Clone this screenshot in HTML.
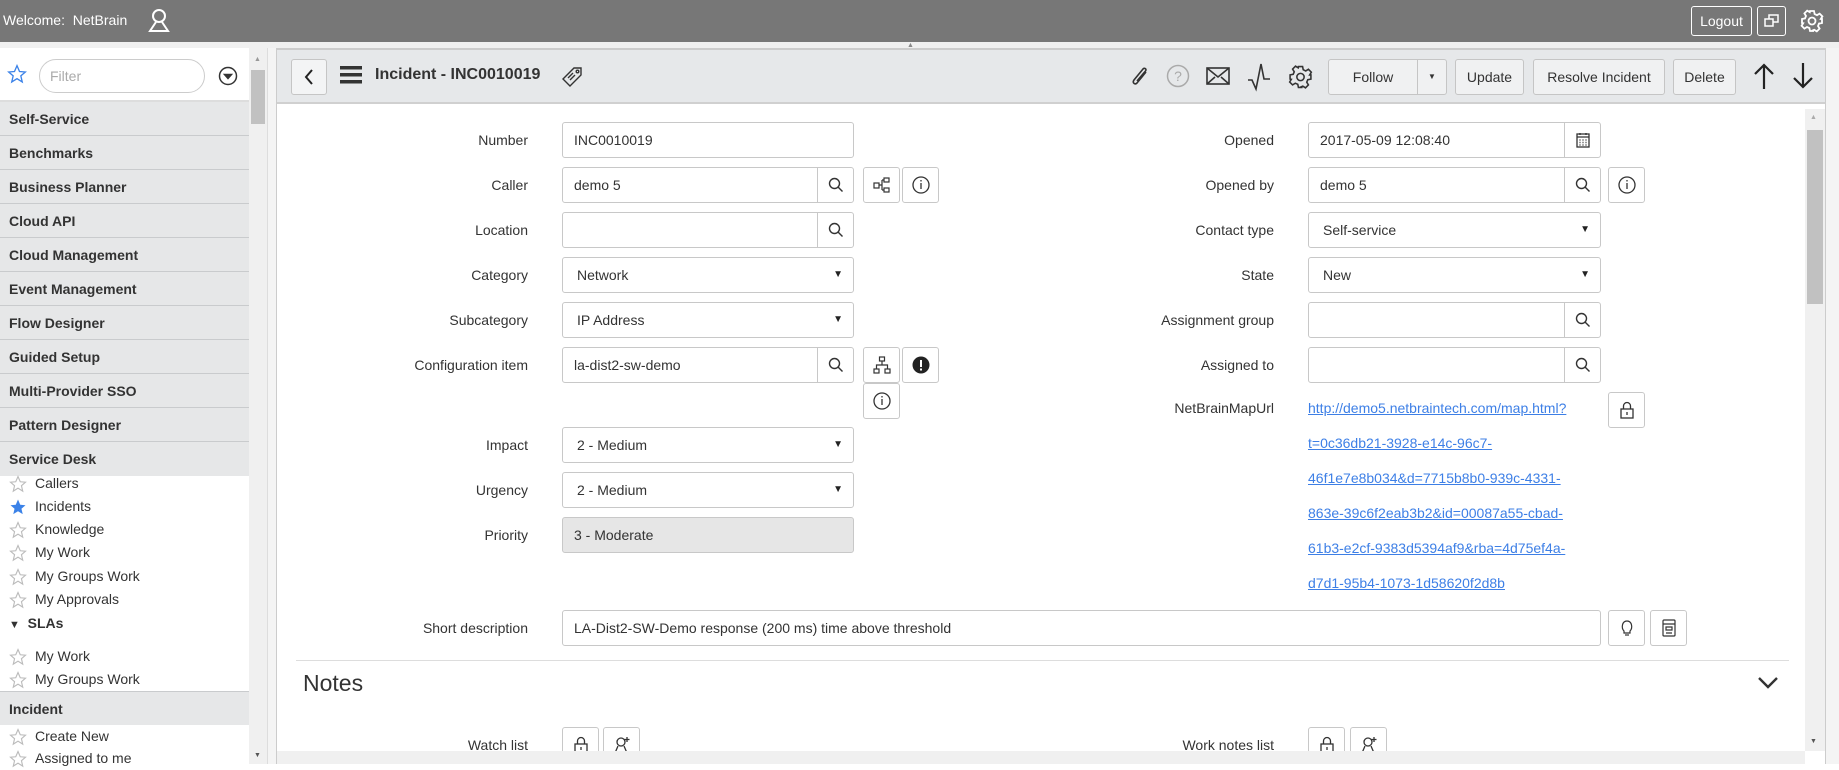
<!DOCTYPE html>
<html><head><meta charset="utf-8">
<style>
*{box-sizing:border-box;margin:0;padding:0}
body{width:1839px;height:764px;overflow:hidden;background:#fff;font-family:"Liberation Sans",Arial,sans-serif;font-size:14px;color:#333;position:relative}
.a{position:absolute}
#top{left:0;top:0;width:1839px;height:42px;background:#777}
#strip{left:0;top:42px;width:1839px;height:6px;background:#f0f0f0}
#side{left:0;top:48px;width:249px;height:716px;background:#fff}
.si{position:absolute;left:0;width:249px;height:34px;background:#e6e7e8;border-bottom:1px solid #c9cbcd;font-weight:bold;color:#333;padding:9px 0 0 9px;font-size:14px}
.li{position:absolute;left:0;width:249px;height:23px;font-size:14px;color:#333;padding-left:35px;line-height:23px}
.li svg{position:absolute;left:9px;top:3px}
.lbl{position:absolute;width:300px;text-align:right;font-size:14px;color:#333;line-height:36px;height:36px}
.inp{position:absolute;height:36px;border:1px solid #c8c8c8;border-radius:3px;background:#fff;font-size:14px;line-height:34px;padding-left:11px;color:#333}
.add{position:absolute;right:0;top:0;width:36px;height:34px;border-left:1px solid #c8c8c8}
.add svg{position:absolute;left:10px;top:9px}
.sel{padding-left:14px}
.sel:after{content:"▼";position:absolute;right:10px;top:0;line-height:34px;font-size:10px;color:#222}
.btn{position:absolute;width:37px;height:36px;border:1px solid #c8c8c8;border-radius:3px;background:#fff}
.btn svg{position:absolute;left:9px;top:8px}
.hb{position:absolute;top:59px;height:36px;border:1px solid #c5c5c5;border-radius:3px;background:#f0f1f2;font-size:14px;line-height:34px;text-align:center;color:#333}
.url{position:absolute;left:1308px;color:#3d7fe6;text-decoration:underline;font-size:14px}
</style></head><body>
<div id="top" class="a">
 <div class="a" style="left:3px;top:12px;color:#fff;font-size:14px">Welcome:&nbsp; NetBrain</div>
 <svg class="a" style="left:147px;top:8px" width="24" height="26" viewBox="0 0 24 26" fill="none" stroke="#fff" stroke-width="2"><circle cx="12" cy="8" r="6"/><path d="M9 14 L3 23 H21 L15 14"/></svg>
 <div class="a" style="left:1691px;top:6px;width:61px;height:30px;border:1px solid #fff;border-radius:3px;color:#fff;text-align:center;line-height:28px;font-size:14px">Logout</div>
 <div class="a" style="left:1757px;top:6px;width:29px;height:30px;border:1px solid #fff;border-radius:3px"><svg class="a" style="left:6px;top:7px" width="16" height="14" fill="none" stroke="#fff" stroke-width="1.5"><rect x="5" y="1" width="9" height="7"/><rect x="1" y="5" width="8" height="7" fill="#777"/></svg></div>
 <svg class="a" style="left:1800px;top:8px" width="24" height="26" viewBox="0 0 24 24" fill="none" stroke="#fff" stroke-width="1.8"><circle cx="12" cy="12" r="3.5"/><path d="M10 2h4l.6 3 2.4 1.2 2.6-1.6 2.8 2.8-1.6 2.6L22 10v4l-3 .6-1 2.4 1.6 2.6-2.8 2.8-2.6-1.6-2.4 1L14 22h-4l-.6-3-2.4-1-2.6 1.6-2.8-2.8L3.2 14.2 2 14v-4l3-.6 1-2.4L4.4 4.4l2.8-2.8 2.6 1.6L10 2z"/></svg>
</div>
<div id="strip" class="a"></div>
<div class="a" style="left:907px;top:42px;font-size:7px;color:#888">▲</div>

<div id="side" class="a">
 <svg class="a" style="left:7px;top:16px" width="20" height="20" viewBox="0 0 24 24" fill="none" stroke="#3b82e8" stroke-width="1.6"><path d="M12 2l3 7 7 .6-5.4 4.7 1.7 7.2L12 17.6 5.7 21.5l1.7-7.2L2 9.6 9 9z"/></svg>
 <div class="a" style="left:39px;top:11px;width:166px;height:34px;border:1px solid #ccc;border-radius:17px;background:#fff;color:#aaa;padding:8px 0 0 10px;font-size:14px">Filter</div>
 <svg class="a" style="left:218px;top:18px" width="20" height="20" fill="none" stroke="#333" stroke-width="1.5"><circle cx="10" cy="10" r="8.5"/><path d="M6.5 8.5h7l-3.5 4z" fill="#333"/></svg>
 <div class="a" style="left:0;top:52px;width:249px;height:2px;background:#ddd"></div>
 <div class="si" style="top:54px">Self-Service</div>
 <div class="si" style="top:88px">Benchmarks</div>
 <div class="si" style="top:122px">Business Planner</div>
 <div class="si" style="top:156px">Cloud API</div>
 <div class="si" style="top:190px">Cloud Management</div>
 <div class="si" style="top:224px">Event Management</div>
 <div class="si" style="top:258px">Flow Designer</div>
 <div class="si" style="top:292px">Guided Setup</div>
 <div class="si" style="top:326px">Multi-Provider SSO</div>
 <div class="si" style="top:360px">Pattern Designer</div>
 <div class="si" style="top:394px;border:none">Service Desk</div>
 <div class="li" style="top:424px"><svg width="18" height="18" viewBox="0 0 24 24" fill="none" stroke="#bbb" stroke-width="1.5"><path d="M12 2l3 7 7 .6-5.4 4.7 1.7 7.2L12 17.6 5.7 21.5l1.7-7.2L2 9.6 9 9z"/></svg>Callers</div>
 <div class="li" style="top:447px"><svg width="18" height="18" viewBox="0 0 24 24" fill="#3b82e8"><path d="M12 2l3 7 7 .6-5.4 4.7 1.7 7.2L12 17.6 5.7 21.5l1.7-7.2L2 9.6 9 9z"/></svg>Incidents</div>
 <div class="li" style="top:470px"><svg width="18" height="18" viewBox="0 0 24 24" fill="none" stroke="#bbb" stroke-width="1.5"><path d="M12 2l3 7 7 .6-5.4 4.7 1.7 7.2L12 17.6 5.7 21.5l1.7-7.2L2 9.6 9 9z"/></svg>Knowledge</div>
 <div class="li" style="top:493px"><svg width="18" height="18" viewBox="0 0 24 24" fill="none" stroke="#bbb" stroke-width="1.5"><path d="M12 2l3 7 7 .6-5.4 4.7 1.7 7.2L12 17.6 5.7 21.5l1.7-7.2L2 9.6 9 9z"/></svg>My Work</div>
 <div class="li" style="top:517px"><svg width="18" height="18" viewBox="0 0 24 24" fill="none" stroke="#bbb" stroke-width="1.5"><path d="M12 2l3 7 7 .6-5.4 4.7 1.7 7.2L12 17.6 5.7 21.5l1.7-7.2L2 9.6 9 9z"/></svg>My Groups Work</div>
 <div class="li" style="top:540px"><svg width="18" height="18" viewBox="0 0 24 24" fill="none" stroke="#bbb" stroke-width="1.5"><path d="M12 2l3 7 7 .6-5.4 4.7 1.7 7.2L12 17.6 5.7 21.5l1.7-7.2L2 9.6 9 9z"/></svg>My Approvals</div>
 <div class="a" style="left:9px;top:567px;font-weight:bold;font-size:14px"><span style="font-size:11px">▼</span>&nbsp;&nbsp;SLAs</div>
 <div class="li" style="top:597px"><svg width="18" height="18" viewBox="0 0 24 24" fill="none" stroke="#bbb" stroke-width="1.5"><path d="M12 2l3 7 7 .6-5.4 4.7 1.7 7.2L12 17.6 5.7 21.5l1.7-7.2L2 9.6 9 9z"/></svg>My Work</div>
 <div class="li" style="top:620px"><svg width="18" height="18" viewBox="0 0 24 24" fill="none" stroke="#bbb" stroke-width="1.5"><path d="M12 2l3 7 7 .6-5.4 4.7 1.7 7.2L12 17.6 5.7 21.5l1.7-7.2L2 9.6 9 9z"/></svg>My Groups Work</div>
 <div class="si" style="top:643px;border-top:1px solid #c9cbcd;border-bottom:none">Incident</div>
 <div class="li" style="top:677px"><svg width="18" height="18" viewBox="0 0 24 24" fill="none" stroke="#bbb" stroke-width="1.5"><path d="M12 2l3 7 7 .6-5.4 4.7 1.7 7.2L12 17.6 5.7 21.5l1.7-7.2L2 9.6 9 9z"/></svg>Create New</div>
 <div class="li" style="top:699px"><svg width="18" height="18" viewBox="0 0 24 24" fill="none" stroke="#bbb" stroke-width="1.5"><path d="M12 2l3 7 7 .6-5.4 4.7 1.7 7.2L12 17.6 5.7 21.5l1.7-7.2L2 9.6 9 9z"/></svg>Assigned to me</div>
</div>
<div class="a" style="left:249px;top:48px;width:18px;height:716px;background:#f0f0f0"></div>
<div class="a" style="left:251px;top:70px;width:14px;height:54px;background:#c1c1c1"></div>
<div class="a" style="left:254px;top:56px;font-size:7px;color:#999">▲</div>
<div class="a" style="left:254px;top:752px;font-size:7px;color:#555">▼</div>
<div class="a" style="left:267px;top:48px;width:10px;height:716px;background:#f4f4f4;border-left:1px solid #ddd;border-right:1px solid #ccc"></div>

<div class="a" style="left:277px;top:48px;width:1548px;height:56px;background:#e6e8ea;border-top:2px solid #ccc;border-bottom:2px solid #d0d0d0"></div>
<div class="a" style="left:291px;top:59px;width:36px;height:36px;border:1px solid #c5c5c5;border-radius:3px;background:#f3f4f5"><svg class="a" style="left:11px;top:9px" width="12" height="16" fill="none" stroke="#222" stroke-width="2"><path d="M9 1L3 8l6 7"/></svg></div>
<svg class="a" style="left:340px;top:66px" width="22" height="18"><rect y="0" width="22" height="3.5" fill="#333"/><rect y="7" width="22" height="3.5" fill="#333"/><rect y="14" width="22" height="3.5" fill="#333"/></svg>
<div class="a" style="left:375px;top:66px;font-weight:bold;font-size:16px;color:#333">Incident - INC0010019</div>
<svg class="a" style="left:561px;top:64px" width="24" height="24" fill="none" stroke="#333" stroke-width="1.4"><path d="M2 15L13 4l7 0 0 7L9 22z"/><circle cx="16.5" cy="7.5" r="1.3"/><path d="M7 14l5-5M9 16l5-5"/></svg>
<svg class="a" style="left:1128px;top:64px" width="24" height="26" fill="none" stroke="#333" stroke-width="1.6"><path d="M18 8L9 19c-2 2-5 0-3-3L15 5c1.5-1.5 4 0 2.5 2L9 17"/></svg>
<svg class="a" style="left:1166px;top:64px" width="24" height="24" fill="none" stroke="#aaa" stroke-width="1.5"><circle cx="12" cy="12" r="10.5"/><text x="12" y="17" text-anchor="middle" font-size="14" fill="#aaa" stroke="none" font-family="Liberation Sans">?</text></svg>
<svg class="a" style="left:1206px;top:67px" width="24" height="18" fill="none" stroke="#333" stroke-width="1.6"><rect x="1" y="1" width="22" height="16"/><path d="M1 1l11 9 11-9M1 17l8-7M23 17l-8-7"/></svg>
<svg class="a" style="left:1247px;top:62px" width="26" height="30" fill="none" stroke="#333" stroke-width="1.6"><path d="M1 18h4l4 9 5-25 3 15h6"/></svg>
<svg class="a" style="left:1288px;top:64px" width="25" height="26" viewBox="0 0 24 24" fill="none" stroke="#333" stroke-width="1.5"><circle cx="12" cy="12" r="3.5"/><path d="M10 2h4l.6 3 2.4 1.2 2.6-1.6 2.8 2.8-1.6 2.6L22 10v4l-3 .6-1 2.4 1.6 2.6-2.8 2.8-2.6-1.6-2.4 1L14 22h-4l-.6-3-2.4-1-2.6 1.6-2.8-2.8L3.2 14.2 2 14v-4l3-.6 1-2.4L4.4 4.4l2.8-2.8 2.6 1.6L10 2z"/></svg>
<div class="hb" style="left:1328px;width:119px;text-align:left"><span style="display:inline-block;width:88px;text-align:center">Follow</span><span style="position:absolute;left:88px;top:0;width:1px;height:34px;background:#c5c5c5"></span><span style="position:absolute;left:99px;top:0;font-size:8px">▼</span></div>
<div class="hb" style="left:1455px;width:69px">Update</div>
<div class="hb" style="left:1533px;width:132px">Resolve Incident</div>
<div class="hb" style="left:1673px;width:63px">Delete</div>
<svg class="a" style="left:1752px;top:62px" width="24" height="28" fill="none" stroke="#222" stroke-width="2.2"><path d="M12 27V3M3 12l9-9 9 9"/></svg>
<svg class="a" style="left:1791px;top:62px" width="24" height="28" fill="none" stroke="#222" stroke-width="2.2"><path d="M12 1v24M3 16l9 9 9-9"/></svg>

<div class="a" style="left:1805px;top:109px;width:20px;height:642px;background:#f0f0f0"></div>
<div class="a" style="left:1807px;top:130px;width:16px;height:174px;background:#c1c1c1"></div>
<div class="a" style="left:1810px;top:114px;font-size:7px;color:#aaa">▲</div>
<div class="a" style="left:1810px;top:738px;font-size:7px;color:#555">▼</div>
<div class="a" style="left:1825px;top:48px;width:14px;height:716px;background:#f4f4f4;border-left:1px solid #ccc"></div>

<div class="lbl" style="left:228px;top:122px">Number</div>
<div class="inp" style="left:562px;top:122px;width:292px">INC0010019</div>
<div class="lbl" style="left:228px;top:167px">Caller</div>
<div class="inp" style="left:562px;top:167px;width:292px">demo 5<div class="add"><svg width="16" height="16" fill="none" stroke="#333" stroke-width="1.4"><circle cx="6.5" cy="6.5" r="5"/><path d="M10 10l4.5 4.5"/></svg></div></div>
<div class="btn" style="left:863px;top:167px"><svg width="18" height="18" fill="none" stroke="#333" stroke-width="1.2"><rect x="1" y="7" width="5" height="5"/><rect x="11" y="2" width="5" height="4"/><rect x="11" y="12" width="5" height="4"/><path d="M6 9h3M9 4v10M9 4h2M9 14h2"/></svg></div>
<div class="btn" style="left:902px;top:167px"><svg width="18" height="18" fill="none" stroke="#333" stroke-width="1.3"><circle cx="9" cy="9" r="8"/><path d="M9 7v6M9 4v1.5"/></svg></div>
<div class="lbl" style="left:228px;top:212px">Location</div>
<div class="inp" style="left:562px;top:212px;width:292px"><div class="add"><svg width="16" height="16" fill="none" stroke="#333" stroke-width="1.4"><circle cx="6.5" cy="6.5" r="5"/><path d="M10 10l4.5 4.5"/></svg></div></div>
<div class="lbl" style="left:228px;top:257px">Category</div>
<div class="inp sel" style="left:562px;top:257px;width:292px">Network</div>
<div class="lbl" style="left:228px;top:302px">Subcategory</div>
<div class="inp sel" style="left:562px;top:302px;width:292px">IP Address</div>
<div class="lbl" style="left:228px;top:347px">Configuration item</div>
<div class="inp" style="left:562px;top:347px;width:292px">la-dist2-sw-demo<div class="add"><svg width="16" height="16" fill="none" stroke="#333" stroke-width="1.4"><circle cx="6.5" cy="6.5" r="5"/><path d="M10 10l4.5 4.5"/></svg></div></div>
<div class="btn" style="left:863px;top:347px"><svg width="18" height="18" fill="none" stroke="#333" stroke-width="1.2"><rect x="6.5" y="1" width="5" height="4"/><rect x="1" y="13" width="5" height="4"/><rect x="12" y="13" width="5" height="4"/><path d="M9 5v4M3.5 13V9h11v4"/></svg></div>
<div class="btn" style="left:902px;top:347px"><svg width="18" height="18"><circle cx="9" cy="9" r="8.5" fill="#222"/><rect x="8" y="4" width="2" height="7" fill="#fff"/><rect x="8" y="12.5" width="2" height="2" fill="#fff"/></svg></div>
<div class="btn" style="left:863px;top:383px"><svg width="18" height="18" fill="none" stroke="#333" stroke-width="1.3"><circle cx="9" cy="9" r="8"/><path d="M9 7v6M9 4v1.5"/></svg></div>
<div class="lbl" style="left:228px;top:427px">Impact</div>
<div class="inp sel" style="left:562px;top:427px;width:292px">2 - Medium</div>
<div class="lbl" style="left:228px;top:472px">Urgency</div>
<div class="inp sel" style="left:562px;top:472px;width:292px">2 - Medium</div>
<div class="lbl" style="left:228px;top:517px">Priority</div>
<div class="inp" style="left:562px;top:517px;width:292px;background:#e6e6e6">3 - Moderate</div>

<div class="lbl" style="left:974px;top:122px">Opened</div>
<div class="inp" style="left:1308px;top:122px;width:293px">2017-05-09 12:08:40<div class="add"><svg width="16" height="16" fill="none" stroke="#333" stroke-width="1.3"><rect x="2" y="2" width="12" height="13"/><path d="M2 5h12M5 1v2M11 1v2"/><path d="M4.5 8h1M7.5 8h1M10.5 8h1M4.5 10.5h1M7.5 10.5h1M10.5 10.5h1M4.5 13h1M7.5 13h1M10.5 13h1" stroke-width="1.5"/></svg></div></div>
<div class="lbl" style="left:974px;top:167px">Opened by</div>
<div class="inp" style="left:1308px;top:167px;width:293px">demo 5<div class="add"><svg width="16" height="16" fill="none" stroke="#333" stroke-width="1.4"><circle cx="6.5" cy="6.5" r="5"/><path d="M10 10l4.5 4.5"/></svg></div></div>
<div class="btn" style="left:1608px;top:167px"><svg width="18" height="18" fill="none" stroke="#333" stroke-width="1.3"><circle cx="9" cy="9" r="8"/><path d="M9 7v6M9 4v1.5"/></svg></div>
<div class="lbl" style="left:974px;top:212px">Contact type</div>
<div class="inp sel" style="left:1308px;top:212px;width:293px">Self-service</div>
<div class="lbl" style="left:974px;top:257px">State</div>
<div class="inp sel" style="left:1308px;top:257px;width:293px">New</div>
<div class="lbl" style="left:974px;top:302px">Assignment group</div>
<div class="inp" style="left:1308px;top:302px;width:293px"><div class="add"><svg width="16" height="16" fill="none" stroke="#333" stroke-width="1.4"><circle cx="6.5" cy="6.5" r="5"/><path d="M10 10l4.5 4.5"/></svg></div></div>
<div class="lbl" style="left:974px;top:347px">Assigned to</div>
<div class="inp" style="left:1308px;top:347px;width:293px"><div class="add"><svg width="16" height="16" fill="none" stroke="#333" stroke-width="1.4"><circle cx="6.5" cy="6.5" r="5"/><path d="M10 10l4.5 4.5"/></svg></div></div>
<div class="lbl" style="left:974px;top:390px">NetBrainMapUrl</div>
<div class="btn" style="left:1608px;top:392px"><svg width="18" height="18" fill="none" stroke="#333" stroke-width="1.3"><rect x="3" y="8" width="12" height="9"/><path d="M5.5 8V5a3.5 3.5 0 0 1 7 0v3M9 11v3"/></svg></div>
<div class="url" style="top:400px">http://demo5.netbraintech.com/map.html?</div>
<div class="url" style="top:435px">t=0c36db21-3928-e14c-96c7-</div>
<div class="url" style="top:470px">46f1e7e8b034&amp;d=7715b8b0-939c-4331-</div>
<div class="url" style="top:505px">863e-39c6f2eab3b2&amp;id=00087a55-cbad-</div>
<div class="url" style="top:540px">61b3-e2cf-9383d5394af9&amp;rba=4d75ef4a-</div>
<div class="url" style="top:575px">d7d1-95b4-1073-1d58620f2d8b</div>

<div class="lbl" style="left:228px;top:610px">Short description</div>
<div class="inp" style="left:562px;top:610px;width:1039px">LA-Dist2-SW-Demo response (200 ms) time above threshold</div>
<div class="btn" style="left:1608px;top:610px"><svg width="18" height="18" fill="none" stroke="#333" stroke-width="1.2"><path d="M6 12c-3-3-2-10 3-10s6 7 3 10v2H6z"/><path d="M7 16h4"/></svg></div>
<div class="btn" style="left:1650px;top:610px"><svg width="18" height="18" fill="none" stroke="#333" stroke-width="1.2"><rect x="3" y="1" width="12" height="16" rx="1"/><path d="M3 5h12M6 8h6v3H6zM6 14h6"/></svg></div>

<div class="a" style="left:296px;top:660px;width:1493px;height:1px;background:#ddd"></div>
<div class="a" style="left:303px;top:670px;font-size:23px;color:#333">Notes</div>
<svg class="a" style="left:1757px;top:676px" width="22" height="14" fill="none" stroke="#333" stroke-width="2.4"><path d="M2 2l9 9 9-9"/></svg>

<div class="lbl" style="left:228px;top:727px">Watch list</div>
<div class="btn" style="left:562px;top:727px"><svg width="18" height="18" fill="none" stroke="#333" stroke-width="1.3"><rect x="3" y="8" width="12" height="9"/><path d="M5.5 8V5a3.5 3.5 0 0 1 7 0v3M9 11v3"/></svg></div>
<div class="btn" style="left:603px;top:727px"><svg width="18" height="18" fill="none" stroke="#333" stroke-width="1.3"><circle cx="8" cy="6" r="4"/><path d="M2 17l3-7M14 17l-3-7M2 17h12M14 1v5M11.5 3.5h5"/></svg></div>
<div class="lbl" style="left:974px;top:727px">Work notes list</div>
<div class="btn" style="left:1308px;top:727px"><svg width="18" height="18" fill="none" stroke="#333" stroke-width="1.3"><rect x="3" y="8" width="12" height="9"/><path d="M5.5 8V5a3.5 3.5 0 0 1 7 0v3M9 11v3"/></svg></div>
<div class="btn" style="left:1350px;top:727px"><svg width="18" height="18" fill="none" stroke="#333" stroke-width="1.3"><circle cx="8" cy="6" r="4"/><path d="M2 17l3-7M14 17l-3-7M2 17h12M14 1v5M11.5 3.5h5"/></svg></div>
<div class="a" style="left:277px;top:751px;width:1528px;height:13px;background:#f0f0f0"></div>
</body></html>
